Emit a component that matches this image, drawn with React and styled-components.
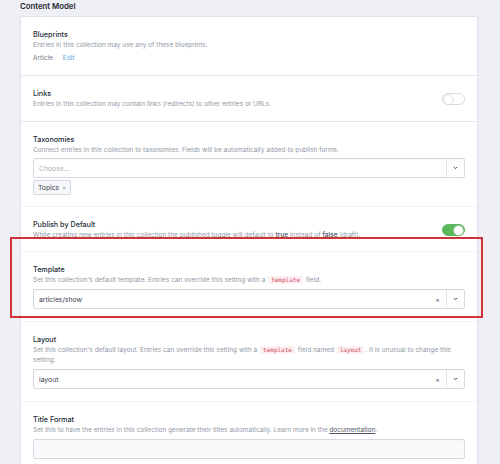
import React from 'react'
import styled, {createGlobalStyle} from 'styled-components'

const GlobalStyle = createGlobalStyle`
  body {
    margin: 0;
    background: #eef0f5;
    font-family: Inter, "Noto Sans", sans-serif;
    color: #2b3440;
  }
`

const Page = styled.div`
  padding: 1px 22px 0 20px;
`

const Heading = styled.div`
  font-size: 7.8px;
  font-weight: 600;
  line-height: 11px;
  color: #1f2733;
  margin-bottom: 4px;
`

const Card = styled.div`
  background: #fff;
  border: 1px solid #dfe3ea;
  border-radius: 2px;
  box-shadow: 0 1px 2px rgba(40, 50, 70, 0.06);
`

const Section = styled.div`
  position: relative;
  display: flex;
  align-items: flex-start;
  padding: ${(p) => (p.tight ? '12px 12px 11px' : '12px')};
  border-top: 1px solid ${(p) => (p.faint ? '#f2f3f6' : '#e4e7ec')};
  &:first-child {
    border-top: none;
  }
`

const Body = styled.div`
  flex: 1;
  min-width: 0;
`

const Title = styled.div`
  font-size: 7.2px;
  font-weight: 500;
  line-height: 11px;
  color: #232b36;
`

const Help = styled.div`
  font-size: 6.5px;
  line-height: 10px;
  color: #8f98a6;
  b {
    color: #5b6370;
    font-weight: 600;
  }
  a {
    color: #4d5563;
    text-decoration: underline;
  }
`

const Code = styled.code`
  display: inline-block;
  font-family: "DejaVu Sans Mono", monospace;
  font-size: 6px;
  line-height: 8px;
  color: #d2455f;
  background: #fdf0f2;
  border-radius: 2px;
  padding: 0 3px;
  margin: 0 1px;
`

const Draft = styled.span`
  text-decoration: underline dotted;
`

const BlueprintRow = styled.div`
  display: flex;
  gap: 10px;
  margin-top: 3px;
  font-size: 6.5px;
  line-height: 10px;
  color: #6f7784;
`

const EditLink = styled.span`
  color: #62a8e5;
`

const Toggle = styled.div`
  flex: none;
  width: 23px;
  height: 12px;
  margin-top: 5px;
  border-radius: 7px;
  box-sizing: border-box;
  border: 1px solid ${(p) => (p.on ? '#5cb85c' : '#d7dbe1')};
  background: ${(p) => (p.on ? '#5cb85c' : '#fff')};
  display: flex;
  align-items: center;
  justify-content: ${(p) => (p.on ? 'flex-end' : 'flex-start')};
  padding: 0 1px;
`

const Knob = styled.div`
  width: 9px;
  height: 9px;
  border-radius: 50%;
  background: #fff;
  box-shadow: 0 0 0 0.6px #c9ced6;
`

const Select = styled.div`
  display: flex;
  align-items: center;
  height: 20px;
  box-sizing: border-box;
  margin-top: ${(p) => p.mt || 4}px;
  border: 1px solid #d4d9e0;
  border-radius: 2px;
  background: ${(p) => (p.muted ? '#f9fafc' : '#fff')};
  box-shadow: inset 0 1px 1px rgba(0, 0, 0, 0.02);
`

const Value = styled.div`
  flex: 1;
  padding-left: 5px;
  font-size: 6.8px;
  color: ${(p) => (p.placeholder ? '#a8b0bb' : '#3a424d')};
`

const Clear = styled.div`
  font-size: 7px;
  color: #5c6470;
  padding-right: 6px;
`

const Caret = styled.div`
  align-self: stretch;
  width: 17px;
  border-left: 1px solid #e3e6eb;
  display: flex;
  align-items: center;
  justify-content: center;
`

const Tag = styled.div`
  display: flex;
  width: fit-content;
  align-items: center;
  gap: 3px;
  margin-top: 2px;
  height: 15px;
  padding: 0 4px;
  box-sizing: border-box;
  border: 1px solid #d4d9e0;
  border-radius: 2px;
  background: #f6f7f9;
  font-size: 6.8px;
  color: #3a424d;
  span {
    font-size: 5.5px;
    color: #6b7380;
  }
`

const Highlight = styled.div`
  position: absolute;
  top: -15px;
  left: -11px;
  right: -6px;
  bottom: 3px;
  border: 2px solid #cf3338;
  pointer-events: none;
`

const Chevron = () => (
  <svg width="5" height="4" viewBox="0 0 5 4">
    <path d="M0.8 1l1.7 1.7 1.7-1.7" fill="none" stroke="#3e4652" strokeWidth="1" />
  </svg>
)

const Dropdown = ({value, placeholder, clearable, mt}) => (
  <Select mt={mt}>
    <Value placeholder={placeholder ? 1 : 0}>{value || placeholder}</Value>
    {clearable && <Clear>×</Clear>}
    <Caret>
      <Chevron />
    </Caret>
  </Select>
)

export default function App() {
  return (
    <Page>
      <GlobalStyle />
      <Heading>Content Model</Heading>
      <Card>
        <Section>
          <Body>
            <Title>Blueprints</Title>
            <Help>Entries in this collection may use any of these blueprints.</Help>
            <BlueprintRow>
              <span>Article</span>
              <EditLink>Edit</EditLink>
            </BlueprintRow>
          </Body>
        </Section>

        <Section>
          <Body>
            <Title>Links</Title>
            <Help>Entries in this collection may contain links (redirects) to other entries or URLs.</Help>
          </Body>
          <Toggle>
            <Knob />
          </Toggle>
        </Section>

        <Section tight>
          <Body>
            <Title>Taxonomies</Title>
            <Help>
              Connect entries in this collection to taxonomies. Fields will be automatically added to publish forms.
            </Help>
            <Dropdown placeholder="Choose..." mt={3} />
            <Tag>
              Topics <span>×</span>
            </Tag>
          </Body>
        </Section>

        <Section faint tight>
          <Body>
            <Title>Publish by Default</Title>
            <Help>
              While creating new entries in this collection the published toggle will default to <b>true</b> instead
              of <b>false</b> <Draft>(draft)</Draft>.
            </Help>
          </Body>
          <Toggle on>
            <Knob />
          </Toggle>
        </Section>

        <Section faint>
          <Highlight />
          <Body>
            <Title>Template</Title>
            <Help>
              Set this collection's default template. Entries can override this setting with a <Code>template</Code>{' '}
              field.
            </Help>
            <Dropdown value="articles/show" clearable />
          </Body>
        </Section>

        <Section faint>
          <Body>
            <Title>Layout</Title>
            <Help>
              Set this collection's default layout. Entries can override this setting with a <Code>template</Code>{' '}
              field named <Code>layout</Code>. It is unusual to change this setting.
            </Help>
            <Dropdown value="layout" clearable />
          </Body>
        </Section>

        <Section faint>
          <Body>
            <Title>Title Format</Title>
            <Help>
              Set this to have the entries in this collection generate their titles automatically. Learn more in the{' '}
              <a>documentation</a>.
            </Help>
            <Select muted />
          </Body>
        </Section>
      </Card>
    </Page>
  )
}
